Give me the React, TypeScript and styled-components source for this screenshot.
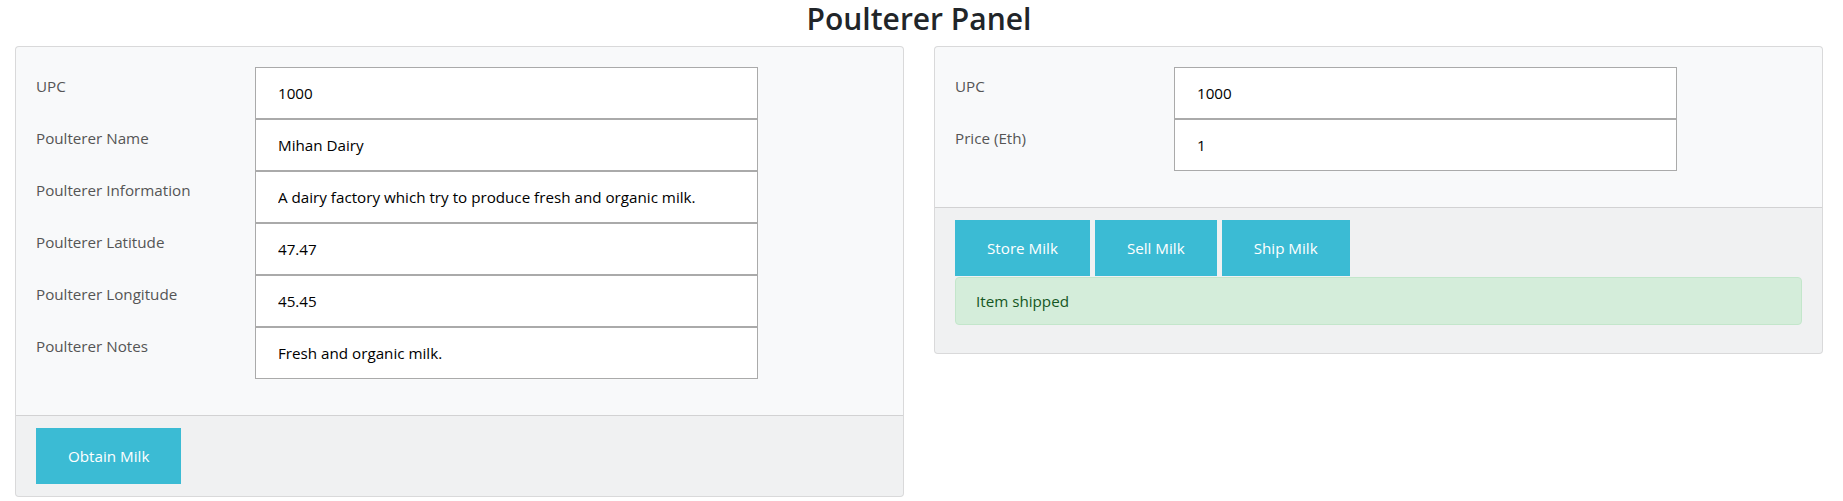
import { createGlobalStyle, styled } from 'styled-components';

const GlobalStyle = createGlobalStyle`
  body {
    margin: 0;
    background: #fff;
    color: #212529;
    font-family: "Open Sans", "Noto Sans", Arial, sans-serif;
    font-size: 15.2px;
    line-height: 24px;
  }
`;

type Field = { label: string; value: string };

const poultererFields: Field[] = [
  { label: 'UPC', value: '1000' },
  { label: 'Poulterer Name', value: 'Mihan Dairy' },
  { label: 'Poulterer Information', value: 'A dairy factory which try to produce fresh and organic milk.' },
  { label: 'Poulterer Latitude', value: '47.47' },
  { label: 'Poulterer Longitude', value: '45.45' },
  { label: 'Poulterer Notes', value: 'Fresh and organic milk.' },
];

const saleFields: Field[] = [
  { label: 'UPC', value: '1000' },
  { label: 'Price (Eth)', value: '1' },
];

function FieldList({ fields }: { fields: Field[] }) {
  return (
    <Fields>
      {fields.map((f) => (
        <FieldRow key={f.label}>
          <Label>{f.label}</Label>
          <Input defaultValue={f.value} />
        </FieldRow>
      ))}
    </Fields>
  );
}

export default function App() {
  return (
    <Page>
      <GlobalStyle />
      <Title>Poulterer Panel</Title>
      <Columns>
        <Card>
          <CardBody>
            <FieldList fields={poultererFields} />
          </CardBody>
          <CardFooter>
            <Actions>
              <ActionBtn>Obtain Milk</ActionBtn>
            </Actions>
          </CardFooter>
        </Card>
        <Card>
          <CardBody>
            <FieldList fields={saleFields} />
          </CardBody>
          <CardFooter>
            <Actions>
              <ActionBtn>Store Milk</ActionBtn>
              <ActionBtn>Sell Milk</ActionBtn>
              <ActionBtn>Ship Milk</ActionBtn>
            </Actions>
            <Alert>Item shipped</Alert>
          </CardFooter>
        </Card>
      </Columns>
    </Page>
  );
}

const Page = styled.div`
  padding: 0 20px 0 15px;
`;

const Title = styled.h2`
  margin: 0 0 8px;
  text-align: center;
  font-size: 30px;
  font-weight: 600;
  line-height: 38px;
  color: #212529;
`;

const Columns = styled.div`
  display: grid;
  grid-template-columns: 1fr 1fr;
  gap: 30px;
  align-items: start;
`;

const Card = styled.div`
  background: #f8f9fa;
  border: 1px solid rgba(0, 0, 0, 0.125);
  border-radius: 4px;
  overflow: hidden;
`;

const CardBody = styled.div`
  padding: 20px;
`;

const Fields = styled.div`
  margin-bottom: 16px;
`;

const FieldRow = styled.div`
  display: grid;
  grid-template-columns: 219px 503px;
`;

const Label = styled.label`
  padding-top: 7px;
  line-height: 24px;
  color: #555;
`;

const Input = styled.input`
  box-sizing: border-box;
  height: 52px;
  margin: 0;
  padding: 0 22px;
  border: 1px solid #aaa;
  border-radius: 0;
  background: #fff;
  color: #000;
  font-family: inherit;
  font-size: 15.2px;
  outline: none;
`;

const CardFooter = styled.div`
  padding: 12px 20px;
  border-top: 1px solid rgba(0, 0, 0, 0.125);
  background: rgba(0, 0, 0, 0.03);
`;

const Actions = styled.div`
  display: flex;
  gap: 5px;
`;

const ActionBtn = styled.button`
  padding: 16px 32px;
  border: none;
  border-radius: 0;
  background: #3bbbd4;
  color: #fff;
  font-family: inherit;
  font-size: 15.2px;
  line-height: 24px;
  cursor: pointer;
`;

const Alert = styled.div`
  margin: 1px 0 16px;
  padding: 11px 20px;
  border: 1px solid #c3e6cb;
  border-radius: 4px;
  background: #d4edda;
  color: #155724;
  line-height: 24px;
`;
